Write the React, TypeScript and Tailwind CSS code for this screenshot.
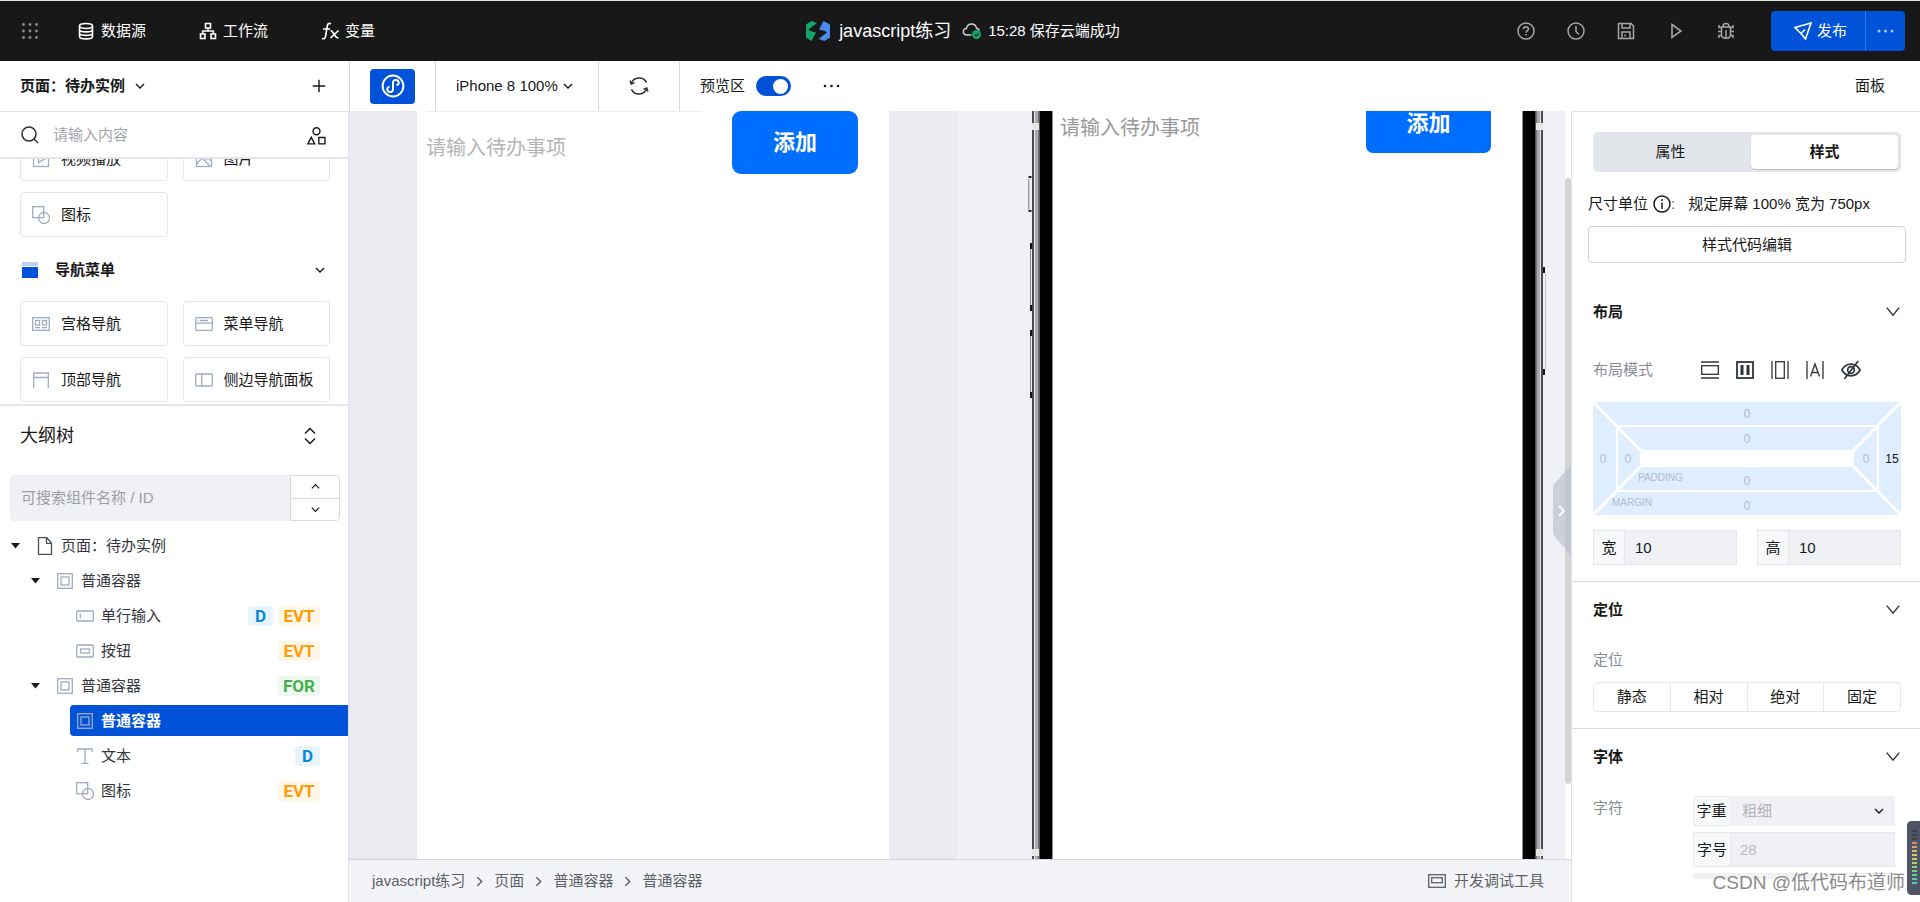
import React from 'react';

interface IconProps {
    size?: number;
    className?: string;
    strokeWidth?: number;
    children: React.ReactNode;
}

// all icons share an 18 unit grid
const Icon: React.FC<IconProps> = ({size = 18, className = '', strokeWidth = 1.3, children}) => (
    <svg
        width={size}
        height={size}
        viewBox="0 0 18 18"
        fill="none"
        stroke="currentColor"
        strokeWidth={strokeWidth}
        className={`shrink-0 ${className}`}
        aria-hidden="true"
    >
        {children}
    </svg>
);

const ChevronDown: React.FC<{ className?: string; size?: number }> = ({className, size = 12}) => (
    <Icon size={size} className={className} strokeWidth={2}><path d="M3 6l6 6 6-6"/></Icon>
);

const ChevronRight: React.FC<{ className?: string; size?: number }> = ({className, size = 13}) => (
    <Icon size={size} className={className} strokeWidth={2}><path d="M6 3l6 6-6 6"/></Icon>
);

const icons = {
    video: <><rect x="1.5" y="1.5" width="15" height="15"/><path d="M6.5 5.5l6 3.5-6 3.5z"/></>,
    image: <><rect x="1.5" y="1.5" width="15" height="15"/><path d="M2 14l5-6 8 8M11 10l2-2 3 3"/><circle cx="12" cy="5" r="1"/></>,
    shape: <><rect x=".7" y=".7" width="11" height="11"/><circle cx="12" cy="12" r="5.5"/></>,
    grid: <><rect x=".7" y="2.7" width="16.6" height="12.6"/><rect x="3.5" y="5.5" width="4" height="4.5"/><rect x="10.5" y="5.5" width="4" height="4.5"/><path d="M3 12.7h5M10 12.7h5"/></>,
    menu: <><rect x=".7" y="2.7" width="16.6" height="12.6" rx="1"/><path d="M1 8.2h16M2.8 5.5h1M5 5.5h8"/></>,
    top: <path d="M1.7 17V2h14.6v15M2 6.5h14"/>,
    side: <><rect x=".7" y="3" width="16.6" height="12" rx="1"/><path d="M6.7 3v12"/></>,
    page: <path d="M2.5.7h8.3L15.5 6v11.3h-13zM10.5 1v5.3h5"/>,
    box: <><rect x="1.7" y="1.7" width="14.6" height="14.6"/><rect x="5" y="5" width="8" height="8"/></>,
    input: <><rect x=".7" y="4" width="16.6" height="10" rx="1"/><path d="M4.3 6.5v5"/></>,
    button: <><rect x=".7" y="3" width="16.6" height="12" rx="1"/><rect x="4.5" y="7" width="9" height="4"/></>,
    text: <path d="M1.7 5V2h14.6v3M9 2v14M5.5 16.3h7"/>,
};

type IconName = keyof typeof icons;

interface ComponentCardProps {
    icon: IconName;
    label: string;
}

const ComponentCard: React.FC<ComponentCardProps> = ({icon, label}) => (
    <button className="flex items-center gap-[11px] h-[45px] pl-[11px] border border-[#e3e6eb] rounded whitespace-nowrap">
        <Icon className="text-[#a0abc2]">{icons[icon]}</Icon>
        <span>{label}</span>
    </button>
);

interface TreeRow {
    label: string;
    icon: IconName;
    level: number;
    open?: boolean;
    selected?: boolean;
    tags?: string[];
}

const treeRows: TreeRow[] = [
    {label: '页面：待办实例', icon: 'page', level: 0, open: true},
    {label: '普通容器', icon: 'box', level: 1, open: true},
    {label: '单行输入', icon: 'input', level: 2, tags: ['D', 'EVT']},
    {label: '按钮', icon: 'button', level: 2, tags: ['EVT']},
    {label: '普通容器', icon: 'box', level: 1, open: true, tags: ['FOR']},
    {label: '普通容器', icon: 'box', level: 2, selected: true},
    {label: '文本', icon: 'text', level: 2, tags: ['D']},
    {label: '图标', icon: 'shape', level: 2, tags: ['EVT']},
];

const levelPadding = ['pl-[11px]', 'pl-[31px]', 'pl-[70px]'];

const tagStyles: Record<string, string> = {
    D: 'w-[25px] bg-[#e8f4fc] text-[#0a8ad6]',
    EVT: 'w-[42px] bg-[#fff6e8] text-[#ff9c07]',
    FOR: 'w-[42px] bg-[#eff8f0] text-[#45b04a]',
};

const TreeItem: React.FC<{ row: TreeRow }> = ({row}) => (
    <li className={`flex items-center h-[35px] ${levelPadding[row.level]}`}>
        {row.open && (
            <button aria-label="收起" className="mr-4">
                <svg width="9" height="6" viewBox="0 0 9 6"><path d="M0 0h9L4.500 5.500z" fill="#181818"/></svg>
            </button>
        )}
        <div className={`flex flex-1 items-center h-[31px] ${row.level === 2 ? 'pl-[6px]' : ''} ${row.selected ? 'bg-[#0052d9] text-white font-bold rounded-l-sm' : 'text-[#33363c]'}`}>
            <Icon className={row.level === 0 ? 'text-[#4b4f57]' : 'text-[#a0abc2]'}>{icons[row.icon]}</Icon>
            <span className="ml-[7px] flex-1">{row.label}</span>
            {row.tags && (
                <span className="flex gap-[5px] mr-7">
                    {row.tags.map((tag) => (
                        <span
                            key={tag}
                            className={`flex items-center justify-center h-5 rounded font-bold text-[17px] leading-5 font-[Roboto,sans-serif] ${tagStyles[tag]}`}
                        >
                            {tag}
                        </span>
                    ))}
                </span>
            )}
        </div>
    </li>
);

const Header = () => (
    <header className="flex items-center h-[61px] shrink-0 bg-[#181818] border-t border-[#dfe3e0] text-white">
        <div className="flex flex-1 items-center pl-[21px]">
            <button aria-label="应用">
                <svg width="18" height="18" viewBox="0 0 18 18" fill="#8a8a8a">
                    {[2.5, 9, 15.5].map((y) => [2.5, 9, 15.5].map((x) => <circle key={`${x}-${y}`} cx={x} cy={y} r="1.4"/>))}
                </svg>
            </button>
            <nav className="flex items-center pl-[38px]">
                <a href="#data" className="flex items-center gap-[6px] w-[122px]">
                    <Icon strokeWidth={1.6}>
                        <ellipse cx="9" cy="4" rx="6.500" ry="2.500"/>
                        <path d="M2.500 4v10.500c0 3.200 13 3.200 13 0V4M2.500 7.500c0 3.200 13 3.200 13 0M2.500 11c0 3.200 13 3.200 13 0"/>
                    </Icon>
                    数据源
                </a>
                <a href="#flow" className="flex items-center gap-[6px] w-[122px]">
                    <Icon strokeWidth={1.6}>
                        <rect x="6.500" y="1.500" width="5" height="4.500"/>
                        <rect x="1.500" y="12" width="4.500" height="4.500"/>
                        <rect x="12" y="12" width="4.500" height="4.500"/>
                        <path d="M9 6v3M3.700 12V9h10.600v3"/>
                    </Icon>
                    工作流
                </a>
                <a href="#vars" className="flex items-center gap-[6px]">
                    <Icon strokeWidth={1.7}>
                        <path d="M10 1.700c-2.500-.8-3.300.3-3.700 2.300L4.500 14.500c-.4 2-1.500 2.700-3.500 2M2 7h7M9.500 8.500c3 0 4 7.800 8 7.500M17.500 8.500L9.500 16"/>
                    </Icon>
                    变量
                </a>
            </nav>
        </div>
        <div className="flex items-center">
            <svg width="24" height="20" viewBox="0 0 24 20">
                <path d="M0 3.500L5.500 0 11 2 2.500 8.500 4.500 10 10 11.500 5.500 20 0 16.500z" fill="#12a66a"/>
                <path d="M24 3.500L17.500 0 13 8.500l6 1.500 2 1.500L12.500 18l6 2 5.500-3.500z" fill="#4d8af0"/>
            </svg>
            <span className="pl-[9px] text-[18px]">javascript练习</span>
            <svg width="20" height="18" viewBox="0 0 20 18" className="ml-[11px]" fill="none">
                <path d="M9.500 13H5C.2 13 .2 6.800 4.500 6.500 5.500.5 13.500.5 14.500 6.200c1.700.3 2.600 1.100 3 2.300" stroke="#d0d0d0" strokeWidth="1.400"/>
                <circle cx="14.500" cy="12.500" r="4.500" fill="#12a66a"/>
                <path d="M12.500 12.500l1.500 1.500 2.700-2.700" stroke="#181818" strokeWidth="1.200"/>
            </svg>
            <span className="pl-[6px]">15:28 保存云端成功</span>
        </div>
        <div className="flex flex-1 items-center justify-end pr-[15px]">
            <div className="flex items-center gap-8 pr-9 text-[#a6a6a6]">
                <button aria-label="帮助"><Icon strokeWidth={1.500}><circle cx="9" cy="9" r="8"/><path d="M6.500 7.200c0-3.300 5-3.200 5-.2 0 1.700-2.500 1.700-2.500 3.700M9 12v1.500"/></Icon></button>
                <button aria-label="历史"><Icon strokeWidth={1.500}><circle cx="9" cy="9" r="8"/><path d="M9 4v5.500l3 3"/></Icon></button>
                <button aria-label="保存"><Icon strokeWidth={1.500}><path d="M1.500 1.500H14l2.500 2.500v12.500h-15zM5 1.500v4.500h8V1.500M5 16.500V10h8v6.500M8 12.500v2"/></Icon></button>
                <button aria-label="运行"><Icon strokeWidth={1.600}><path d="M5 2.500L14 9l-9 6.500z"/></Icon></button>
                <button aria-label="调试"><Icon strokeWidth={1.500}><path d="M6 4.500c0-4 6-4 6 0M4.500 5h9v7.500c0 5-9 5-9 0zM9 8v8M1 9.500h3.500M13.500 9.500H17M2 3v2.500h2.500M16 3v2.500h-2.500M2 16v-2.500h2.500M16 16v-2.500h-2.500"/></Icon></button>
            </div>
            <div className="flex h-10 bg-[#0052d9] rounded">
                <button className="flex items-center gap-[5px] w-[95px] pl-[23px] border-r border-[#3a7be6]">
                    <Icon strokeWidth={1.600}><path d="M1 5.500L17 1l-5.500 16L7 11.500zM7 11.500l4-4"/></Icon>
                    发布
                </button>
                <button aria-label="更多" className="flex items-center justify-center w-[39px]">
                    <svg width="17" height="4" viewBox="0 0 17 4" fill="#a9c6f5"><circle cx="2" cy="2" r="1.500"/><circle cx="8.500" cy="2" r="1.500"/><circle cx="15" cy="2" r="1.500"/></svg>
                </button>
            </div>
        </div>
    </header>
);

const Toolbar = () => (
    <div className="flex items-stretch h-[50px] shrink-0">
        <div className="flex items-center justify-between w-[350px] pl-5 pr-[23px] border-r border-[#d5d8e0]">
            <button className="flex items-center gap-[9px] font-bold">
                页面：待办实例
                <ChevronDown/>
            </button>
            <button aria-label="新建页面"><Icon size={14} strokeWidth={1.800}><path d="M9 1v16M1 9h16"/></Icon></button>
        </div>
        <div className="flex items-center px-5 border-r border-[#d5d8e0]">
            <button aria-label="小程序" className="flex items-center justify-center w-[45px] h-[35px] rounded bg-[#0052d9] text-white">
                <Icon size={24} strokeWidth={1.500}>
                    <circle cx="9" cy="9" r="7.800"/>
                    <path d="M9 11.200V6.500c0-3 4.300-2.500 4.300 0 0 1-.7 1.700-1.700 1.900M9 6.800v4.700c0 3-4.300 2.500-4.300 0 0-1 .7-1.700 1.700-1.900"/>
                </Icon>
            </button>
        </div>
        <div className="flex items-center w-[163px] pl-5 border-r border-[#d5d8e0]">
            <select aria-label="设备" className="appearance-none bg-transparent">
                <option>iPhone 8 100%</option>
            </select>
            <ChevronDown className="ml-1"/>
        </div>
        <div className="flex items-center justify-center w-[81px] border-r border-[#d5d8e0]">
            <button aria-label="刷新">
                <Icon size={20} className="text-[#2b2e33]"><path d="M2 7C4 .5 13 0 15.800 6M16 11c-2 6.500-11 7-13.800 1M1 4l1 3.300L5 6M17 14l-1-3.300-3 1.300"/></Icon>
            </button>
        </div>
        <label className="flex items-center gap-[11px] pl-5">
            预览区
            <input
                type="checkbox"
                defaultChecked
                className="appearance-none flex items-center justify-end w-[35px] h-5 px-[3px] rounded-full bg-[#0052d9] before:content-[''] before:size-[15px] before:rounded-full before:bg-white"
            />
        </label>
        <button aria-label="更多" className="ml-8">
            <svg width="17" height="4" viewBox="0 0 17 4" fill="#181818"><circle cx="2" cy="2" r="1.300"/><circle cx="8.500" cy="2" r="1.300"/><circle cx="15" cy="2" r="1.300"/></svg>
        </button>
        <button className="ml-auto mr-[35px]">面板</button>
    </div>
);

const LeftPanel = () => (
    <aside className="flex flex-col w-[349px] shrink-0 border-r border-[#dfe2e8] border-t border-t-[#dfe2e6]">
        <div className="flex items-center h-[47px] shrink-0 pl-[21px] pr-[22px] border-b-2 border-[#e4e6ea]">
            <Icon className="text-[#2b2e33]" strokeWidth={1.500}><circle cx="8" cy="8" r="7"/><path d="M13 13l4 4"/></Icon>
            <input aria-label="搜索组件" placeholder="请输入内容" className="flex-1 min-w-0 ml-[14px] outline-none placeholder:text-[#a3a6ad]"/>
            <button aria-label="组件库" className="pt-1">
                <Icon className="text-[#181818]" size={19}><circle cx="9" cy="4" r="3.300"/><path d="M4 9.800L7.300 16H.8zM11.200 10h5.800v6h-5.800z"/></Icon>
            </button>
        </div>
        <div className="flex flex-col justify-end h-[245px] shrink-0 overflow-hidden pl-5 pr-[18px] pb-[2px]">
            <div className="grid grid-cols-2 gap-x-[15px] gap-y-[11px] shrink-0">
                <ComponentCard icon="video" label="视频播放"/>
                <ComponentCard icon="image" label="图片"/>
                <ComponentCard icon="shape" label="图标"/>
            </div>
            <button className="flex items-center h-16 shrink-0 pr-1 pt-[2px] font-bold">
                <svg width="18" height="16" viewBox="0 0 18 16"><path d="M2 0h16v4H2z" fill="#b9d0f7"/><path d="M2 5h16v11H2z" fill="#0052d9"/></svg>
                <span className="ml-[17px] mr-auto">导航菜单</span>
                <ChevronDown/>
            </button>
            <div className="grid grid-cols-2 gap-x-[15px] gap-y-[11px] shrink-0">
                <ComponentCard icon="grid" label="宫格导航"/>
                <ComponentCard icon="menu" label="菜单导航"/>
                <ComponentCard icon="top" label="顶部导航"/>
                <ComponentCard icon="side" label="侧边导航面板"/>
            </div>
        </div>
        <div className="flex-1 border-t-2 border-[#e7e7e7]">
            <div className="flex items-center justify-between h-[59px] pl-5 pr-[29px]">
                <h2 className="text-[18px]">大纲树</h2>
                <button aria-label="展开"><Icon strokeWidth={1.500}><path d="M4 6.500l5-5 5 5M4 11.500l5 5 5-5"/></Icon></button>
            </div>
            <div className="flex h-[46px] mt-[10px] ml-[10px] mr-2">
                <input aria-label="搜索大纲树" placeholder="可搜索组件名称 / ID" className="flex-1 min-w-0 pl-[11px] rounded-l bg-[#f0f1f5] outline-none placeholder:text-[#9a9da5]"/>
                <div className="flex flex-col w-[50px] border border-[#d9dbdf] rounded-r">
                    <button aria-label="上一个" className="flex flex-1 items-center justify-center border-b border-[#d9dbdf]"><ChevronDown size={11} className="rotate-180"/></button>
                    <button aria-label="下一个" className="flex flex-1 items-center justify-center"><ChevronDown size={11}/></button>
                </div>
            </div>
            <ul className="mt-[7px]">
                {treeRows.map((row, index) => <TreeItem key={index} row={row}/>)}
            </ul>
        </div>
    </aside>
);

// side of the phone body with its hardware buttons, mirrored for the right side
const PhoneEdge: React.FC<{ flip?: boolean }> = ({flip}) => (
    <svg viewBox="0 0 25 748" preserveAspectRatio="xMinYMin slice" className={`w-[25px] shrink-0 h-[748px] ${flip ? '-scale-x-100' : ''}`}>
        <path d="M4 0h21v748H4z" fill="#4a4a4e"/>
        <path d="M6 0h1v748H6z" fill="#e9e9ec"/>
        <path d="M7 0h3v748H7z" fill="#aaa8ae"/>
        <path d="M10 0h1v748h-1z" fill="#77757a"/>
        <path d="M11 0h1v748h-1z" fill="#55555a"/>
        <path d="M12 0h12v748H12z" fill="#000"/>
        <path d="M24 0h1v748h-1z" fill="#8f8f92"/>
        <path d="M4 12h7v7H4zM4 738h7v7H4z" fill="#e6e6e2"/>
        {flip ? (
            <>
                <path d="M2 156h2v6H2zM2 258h2v6H2z" fill="#111"/>
                <path d="M1.500 162v96" stroke="#c4c4c8"/>
            </>
        ) : (
            <>
                <path d="M.5 66h3M.5 100h3" stroke="#222" strokeWidth="2"/>
                <path d="M.8 68v31" stroke="#77777b"/>
                <path d="M2 132h2v6H2zM2 194h2v6H2zM2 219h2v6H2zM2 281h2v6H2z" fill="#111"/>
                <path d="M2.500 138v56M2.500 225v56" stroke="#88888c"/>
            </>
        )}
    </svg>
);

const Workspace = () => (
    <main className="flex flex-col flex-1 min-w-0">
        <div className="flex flex-1 min-h-0 overflow-hidden">
            <section className="flex flex-1 justify-center min-w-0 bg-[#e9ebf0]">
                <div className="flex items-start justify-between w-[472px] pl-[9px] pr-[31px] bg-white">
                    <input aria-label="待办事项" placeholder="请输入待办事项" className="w-[276px] h-[74px] border-t border-[#eeeeee] text-[20px] outline-none placeholder:text-[#b5b5b5]"/>
                    <button className="w-[126px] h-[63px] rounded-[9px] bg-[#006fff] text-white text-[22px] font-bold">添加</button>
                </div>
            </section>
            <section className="flex w-[614px] shrink-0 bg-[#eff1f6]">
                <div className="flex flex-1 justify-end pr-[18px]">
                    <PhoneEdge/>
                    <div className="flex flex-1 items-start justify-between max-w-[469px] pl-[7px] pr-[31px] bg-white">
                        <input aria-label="待办事项预览" placeholder="请输入待办事项" className="w-[276px] h-[34px] text-[20px] outline-none placeholder:text-[#999999]"/>
                        <button className="w-[125px] h-[42px] pb-4 rounded-b-[7px] bg-[#006fff] text-white text-[22px] leading-6 font-bold">添加</button>
                    </div>
                    <PhoneEdge flip/>
                </div>
                <div className="relative w-[6px] bg-white">
                    <div className="h-[606px] mt-[67px] rounded-full bg-[#d4d4d4]"/>
                    <button aria-label="收起面板" className="absolute right-0 top-[354px]">
                        <svg width="18" height="90" viewBox="0 0 18 90">
                            <path d="M18 0L2 18Q0 20 0 23v44q0 3 2 5l16 18z" fill="#b9bfcd" fillOpacity=".65"/>
                            <path d="M6 41l5 5-5 5" fill="none" stroke="#fff" strokeWidth="1.800"/>
                        </svg>
                    </button>
                </div>
            </section>
        </div>
        <footer className="flex items-center h-[43px] shrink-0 pl-[23px] pr-[27px] border-t border-[#d3d6dd] bg-[#f3f4f7] text-[#5d6066]">
            <nav className="flex items-center gap-2">
                <a href="#app">javascript练习</a>
                <ChevronRight/>
                <a href="#page">页面</a>
                <ChevronRight/>
                <a href="#outer">普通容器</a>
                <ChevronRight/>
                <a href="#inner">普通容器</a>
            </nav>
            <button className="flex items-center gap-2 ml-auto">
                <Icon><rect x=".7" y="2.700" width="16.600" height="12.600"/><rect x="3.700" y="5.700" width="10.600" height="5"/></Icon>
                开发调试工具
            </button>
        </footer>
    </main>
);

const PanelTitle: React.FC<{ title: string }> = ({title}) => (
    <button className="flex items-center justify-between w-[308px] h-14 font-bold">
        {title}
        <Icon size={16} strokeWidth={1.500} className="text-[#2b2e33]"><path d="M2 4l7 8.500L16 4"/></Icon>
    </button>
);

const spacingInput = "absolute w-6 h-4 text-center text-[12px] leading-4 bg-transparent outline-none placeholder:text-[#b8babf]";

const SpacingEditor = () => (
    <div className="relative w-[308px] h-[113px]">
        <svg width="308" height="113" viewBox="0 0 308 113">
            <path d="M0 0h308v113H0z" fill="#deeeff"/>
            <path d="M0 0l48 49M308 0l-48 49M0 113l48-49M308 113l-48-49" stroke="#fff" strokeWidth="3"/>
            <path d="M24 24h261v65H24z" fill="none" stroke="#fff" strokeWidth="2"/>
            <path d="M49 48h210l2 3v11l-2 3H49l-2-3V51z" fill="#fff"/>
        </svg>
        <input aria-label="上外边距" placeholder="0" className={`${spacingInput} left-[142px] top-1`}/>
        <input aria-label="上内边距" placeholder="0" className={`${spacingInput} left-[142px] top-[29px]`}/>
        <input aria-label="左外边距" placeholder="0" className={`${spacingInput} left-[-2px] top-[49px]`}/>
        <input aria-label="左内边距" placeholder="0" className={`${spacingInput} left-[23px] top-[49px]`}/>
        <input aria-label="右内边距" placeholder="0" className={`${spacingInput} left-[261px] top-[49px]`}/>
        <input aria-label="右外边距" defaultValue="15" className={`${spacingInput} left-[287px] top-[49px]`}/>
        <input aria-label="下内边距" placeholder="0" className={`${spacingInput} left-[142px] top-[71px]`}/>
        <input aria-label="下外边距" placeholder="0" className={`${spacingInput} left-[142px] top-[96px]`}/>
        <span className="absolute left-[45px] top-[70px] text-[10px] leading-3 text-[#aebccd]">PADDING</span>
        <span className="absolute left-[19px] top-[95px] text-[10px] leading-3 text-[#aebccd]">MARGIN</span>
    </div>
);

const SizeField: React.FC<{ label: string }> = ({label}) => (
    <label className="flex flex-1 min-w-0 h-[35px] border border-[#e5e7ec] bg-[#f0f1f5]">
        <span className="flex items-center justify-center w-[31px] shrink-0 border-r border-[#e5e7ec] bg-[#f6f8fa]">{label}</span>
        <input defaultValue="10" className="flex-1 min-w-0 pl-[10px] bg-transparent outline-none"/>
    </label>
);

const RightPanel = () => (
    <aside className="w-[349px] shrink-0 overflow-hidden border-l border-t border-[#dfe2e6]">
        <div className="pl-[21px] pr-[18px]">
            <div className="flex h-10 mt-5 p-[3px] w-[308px] rounded-[5px] bg-[#e2e6eb]">
                <button className="flex-1 pr-[6px]">属性</button>
                <button className="w-[147px] rounded bg-white font-bold shadow-[0_1px_1px_#b4bcc8]">样式</button>
            </div>
        </div>
        <div className="pl-4 pr-[14px]">
            <div className="flex items-center h-[54px] pt-[10px]">
                尺寸单位
                <Icon className="ml-[5px]" strokeWidth={1.500}><circle cx="9" cy="9" r="8"/><path d="M9 7.500V14M9 4v2"/></Icon>
                <span className="text-[#5d6066]">:</span>
                <span className="ml-[13px]">规定屏幕 100% 宽为 750px</span>
            </div>
            <button className="w-full h-[37px] border border-[#cfd2da] rounded-sm">样式代码编辑</button>
        </div>
        <section className="pl-[21px] pr-[18px] pt-[21px] pb-4">
            <PanelTitle title="布局"/>
            <div className="flex items-center h-[60px] text-[#878b94]">
                布局模式
                <div className="flex items-center gap-[17px] ml-12 text-[#2f333b]">
                    <button aria-label="块级"><Icon><path d="M0 1h18M0 17h18"/><rect x=".7" y="4.700" width="16.600" height="8.600"/></Icon></button>
                    <button aria-label="弹性"><Icon strokeWidth={1.800}><rect x="1" y="1" width="16" height="16"/><path d="M6 4v10M12 4v10" strokeWidth="3"/></Icon></button>
                    <button aria-label="行内块"><Icon><path d="M1 0v18M17 0v18"/><rect x="4.700" y=".7" width="8.600" height="16.600"/></Icon></button>
                    <button aria-label="行内"><Icon><path d="M1 0v18M17 0v18M4.500 15.500L9 3l4.500 12.500M6 11.500h6"/></Icon></button>
                    <button aria-label="隐藏"><Icon size={20} strokeWidth={1.500}><path d="M.8 9c4-7 12.400-7 16.400 0-4 7-12.400 7-16.400 0zM15.500 1L3 17"/><circle cx="9" cy="9" r="3"/></Icon></button>
                </div>
            </div>
            <div className="mt-[2px]">
                <SpacingEditor/>
            </div>
            <div className="flex gap-5 mt-[15px] w-[308px]">
                <SizeField label="宽"/>
                <SizeField label="高"/>
            </div>
        </section>
        <section className="pl-[21px] pr-[18px] pb-4 border-t border-[#d8dadd]">
            <PanelTitle title="定位"/>
            <p className="py-[10px] leading-6 text-[#878b94]">定位</p>
            <div className="flex w-[308px] h-[30px] border border-[#e5e7ec] rounded divide-x divide-[#e5e7ec]">
                <button className="flex-1">静态</button>
                <button className="flex-1">相对</button>
                <button className="flex-1">绝对</button>
                <button className="flex-1">固定</button>
            </div>
        </section>
        <section className="pl-[21px] border-t border-[#d8dadd]">
            <PanelTitle title="字体"/>
            <div className="flex justify-between pt-[11px] pr-[25px]">
                <span className="leading-6 text-[#878b94]">字符</span>
                <div className="w-[202px] h-[83px] overflow-hidden">
                    <label className="flex items-center h-[30px] pr-[10px] bg-[#f0f1f5] rounded-l">
                        <span className="flex items-center justify-center w-[36px] h-full border border-r-0 border-[#e5e7ec] rounded-l bg-[#f6f8fa] whitespace-nowrap">字重</span>
                        <select className="appearance-none flex-1 pl-[13px] bg-transparent text-[#b0b2b8]">
                            <option>粗细</option>
                        </select>
                        <ChevronDown/>
                    </label>
                    <label className="flex h-[35px] mt-[6px] border border-[#e5e7ec] bg-[#f0f1f5]">
                        <span className="flex items-center justify-center w-[37px] border-r border-[#e5e7ec] bg-[#f6f8fa] whitespace-nowrap">字号</span>
                        <input placeholder="28" className="flex-1 min-w-0 pl-[9px] bg-transparent outline-none placeholder:text-[#b8babf]"/>
                    </label>
                    <div className="flex justify-between mt-[6px]">
                        <div className="w-[145px] h-[30px] bg-[#f0f1f5]"/>
                        <div className="w-[51px] h-[30px] border border-[#e5e7ec]"/>
                    </div>
                </div>
            </div>
        </section>
    </aside>
);

const meterBars = ['#3a3f4c', '#3a3f4c', '#3a3f4c', '#e08a5a', '#e0a45a', '#dcb85a', '#d8c85a', '#c8cf5e', '#b0cf62', '#98cf68', '#7ccf78', '#62cf90', '#54cfa6', '#4ccfb4'];

const App = () => {
    return (
        <div className="relative flex flex-col h-screen overflow-hidden bg-white text-[15px] leading-6 text-[#181818] font-['Liberation_Sans','Noto_Sans_CJK_SC',sans-serif]">
            <Header/>
            <Toolbar/>
            <div className="flex flex-1 min-h-0">
                <LeftPanel/>
                <Workspace/>
                <RightPanel/>
            </div>
            <span className="absolute right-[15px] bottom-[7px] text-[19px] text-[#8a8a8a]">CSDN @低代码布道师</span>
            <svg width="13" height="74" viewBox="0 0 13 74" className="absolute right-0 bottom-[7px]">
                <path d="M13 0H5Q0 0 0 5v64q0 5 5 5h8z" fill="#4f5566"/>
                {meterBars.map((color, index) => <path key={index} d={`M5 ${10 + index * 4}h5`} stroke={color} strokeWidth="2"/>)}
            </svg>
        </div>
    );
};

export default App;
